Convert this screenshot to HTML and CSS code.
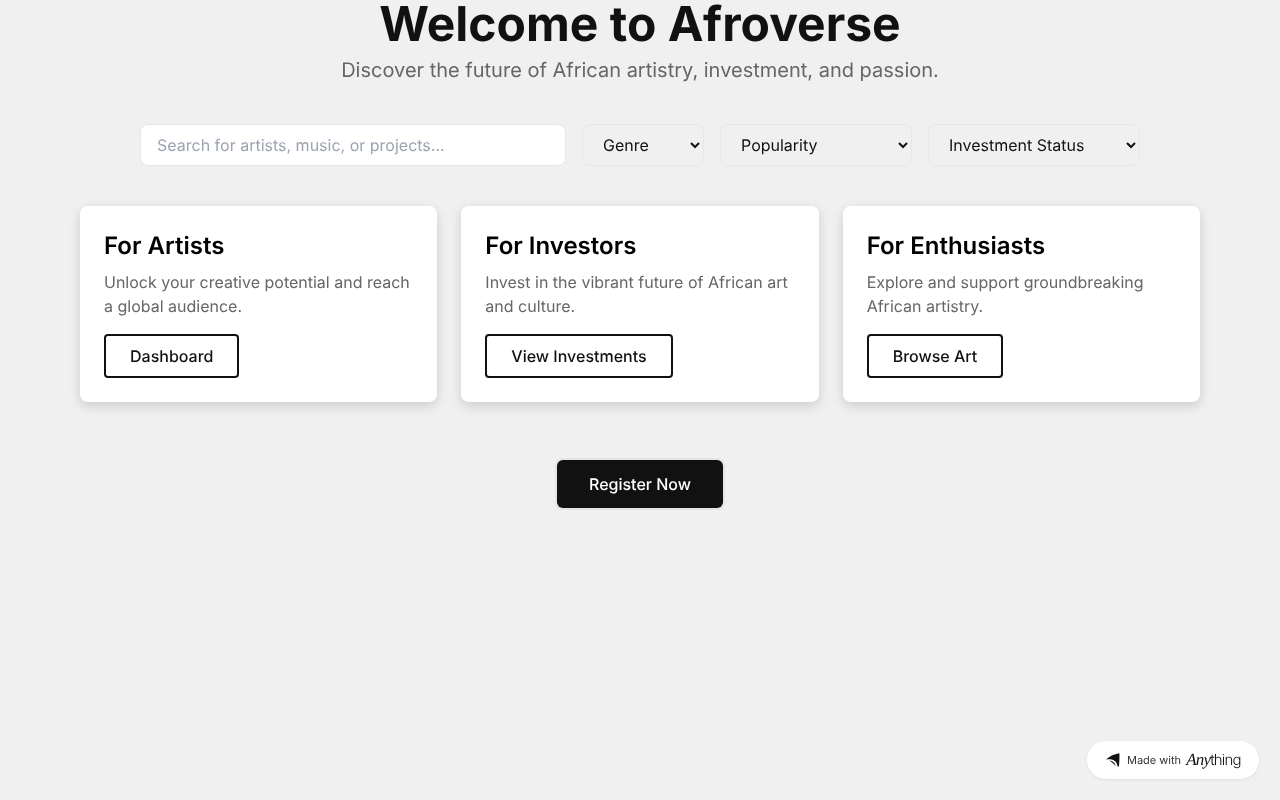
FILE: index.html
```html
<!DOCTYPE html>
<html lang="en">
<head>
    <meta charset="UTF-8">
    <meta name="viewport" content="width=device-width, initial-scale=1.0">
    <title>Afroverse</title>
    <link rel="stylesheet" href="styles.css">
</head>
<body>
    <main class="container">
        <header class="hero">
            <h1>Welcome to Afroverse</h1>
            <p>Discover the future of African artistry, investment, and passion.</p>
        </header>

        <div class="filters">
            <input type="text" class="search" placeholder="Search for artists, music, or projects...">
            <select class="filter filter-genre"><option>Genre</option></select>
            <select class="filter filter-popularity"><option>Popularity</option></select>
            <select class="filter filter-status"><option>Investment Status</option></select>
        </div>

        <section class="cards">
            <div class="card">
                <h2>For Artists</h2>
                <p>Unlock your creative potential and reach a global audience.</p>
                <button class="btn-outline">Dashboard</button>
            </div>
            <div class="card">
                <h2>For Investors</h2>
                <p>Invest in the vibrant future of African art and culture.</p>
                <button class="btn-outline">View Investments</button>
            </div>
            <div class="card">
                <h2>For Enthusiasts</h2>
                <p>Explore and support groundbreaking African artistry.</p>
                <button class="btn-outline">Browse Art</button>
            </div>
        </section>

        <div class="register">
            <button class="btn-primary">Register Now</button>
        </div>
    </main>

    <a class="badge" href="#">
        <svg class="badge-icon" width="14" height="14" viewBox="0 0 14 14" aria-hidden="true">
            <path d="M0 6.6C3 3.8 8 1 13.4 0.3C13.6 4.5 13.4 9.5 12.9 13.8L11.5 13.3C11.3 9.6 8.6 6.6 4.2 6.2C2.9 6.1 1.4 6.2 0 6.6Z" fill="#111"/>
            <path d="M3.2 7.4C6.6 7.5 9.2 9.8 9.9 13.3C8.2 10.9 6 9 3.2 7.4Z" fill="#111"/>
        </svg>
        <span class="badge-made">Made with</span>
        <span class="badge-name"><i>Any</i>thing</span>
    </a>
</body>
</html>
```

FILE: styles.css
```css
* {
    margin: 0;
    padding: 0;
    box-sizing: border-box;
    font-family: 'Inter', sans-serif;
    font-optical-sizing: none;
    text-rendering: geometricPrecision;
}

body {
    height: 800px;
    overflow: hidden;
    background-color: #f0f0f0;
    color: #111111;
}

.container {
    padding: 0 80px;
    will-change: opacity;
}

/* Title */
.hero {
    text-align: center;
}

.hero h1 {
    font-size: 48px;
    line-height: 48px;
    font-weight: 700;
    color: #111111;
}

.hero p {
    margin-top: 8px;
    font-size: 20px;
    line-height: 28px;
    color: #666666;
}

/* Search and filters */
.filters {
    display: flex;
    gap: 16px;
    width: 1000px;
    margin: 40px auto 0;
}

.search {
    flex: 1;
    height: 42px;
    padding: 0 16px;
    background-color: #ffffff;
    border: 1px solid #e5e7eb;
    border-radius: 8px;
    font-size: 16px;
    color: #111111;
}

.search::placeholder {
    color: #9ca3af;
}

.filter {
    height: 42px;
    padding: 0 16px;
    background-color: #f0f0f0;
    border: 1px solid #e5e7eb;
    border-radius: 8px;
    font-size: 16px;
    color: #111111;
}

.filter-genre {
    width: 122px;
}

.filter-popularity {
    width: 192px;
}

.filter-status {
    width: 212px;
}

/* Cards */
.cards {
    display: grid;
    grid-template-columns: repeat(3, 1fr);
    gap: 24px;
    margin-top: 40px;
}

.card {
    padding: 24px;
    background-color: #ffffff;
    border-radius: 8px;
    box-shadow: 0 4px 12px rgba(0, 0, 0, 0.15);
}

.card h2 {
    font-size: 24px;
    line-height: 32px;
    font-weight: 600;
    color: #000000;
}

.card p {
    margin-top: 8px;
    font-size: 16px;
    line-height: 24px;
    color: #666666;
}

.btn-outline {
    display: block;
    height: 44px;
    margin-top: 16px;
    padding: 0 24px;
    background-color: #ffffff;
    border: 2px solid #111111;
    border-radius: 4px;
    font-size: 16px;
    font-weight: 500;
    color: #111111;
    cursor: pointer;
}

/* Register */
.register {
    display: flex;
    justify-content: center;
    margin-top: 58px;
}

.btn-primary {
    height: 48px;
    padding: 0 32px;
    background-color: #111111;
    border: none;
    border-radius: 6px;
    box-shadow: 0 0 0 2px #e3e3ea;
    font-size: 16px;
    font-weight: 500;
    color: #ffffff;
    cursor: pointer;
}

/* Made with badge */
.badge {
    position: fixed;
    right: 21px;
    bottom: 21px;
    display: flex;
    align-items: center;
    width: 172px;
    height: 38px;
    padding-left: 19px;
    background-color: #ffffff;
    border-radius: 19px;
    box-shadow: 0 1px 3px rgba(0, 0, 0, 0.07);
    text-decoration: none;
    will-change: opacity;
}

.badge-made {
    margin-left: 7px;
    font-size: 11px;
    color: #333333;
}

.badge-name {
    margin-left: 5px;
    font-size: 15px;
    font-weight: 300;
    letter-spacing: -0.8px;
    color: #111111;
}

.badge-name i {
    font-family: 'Liberation Serif', serif;
    font-size: 17px;
}
```
